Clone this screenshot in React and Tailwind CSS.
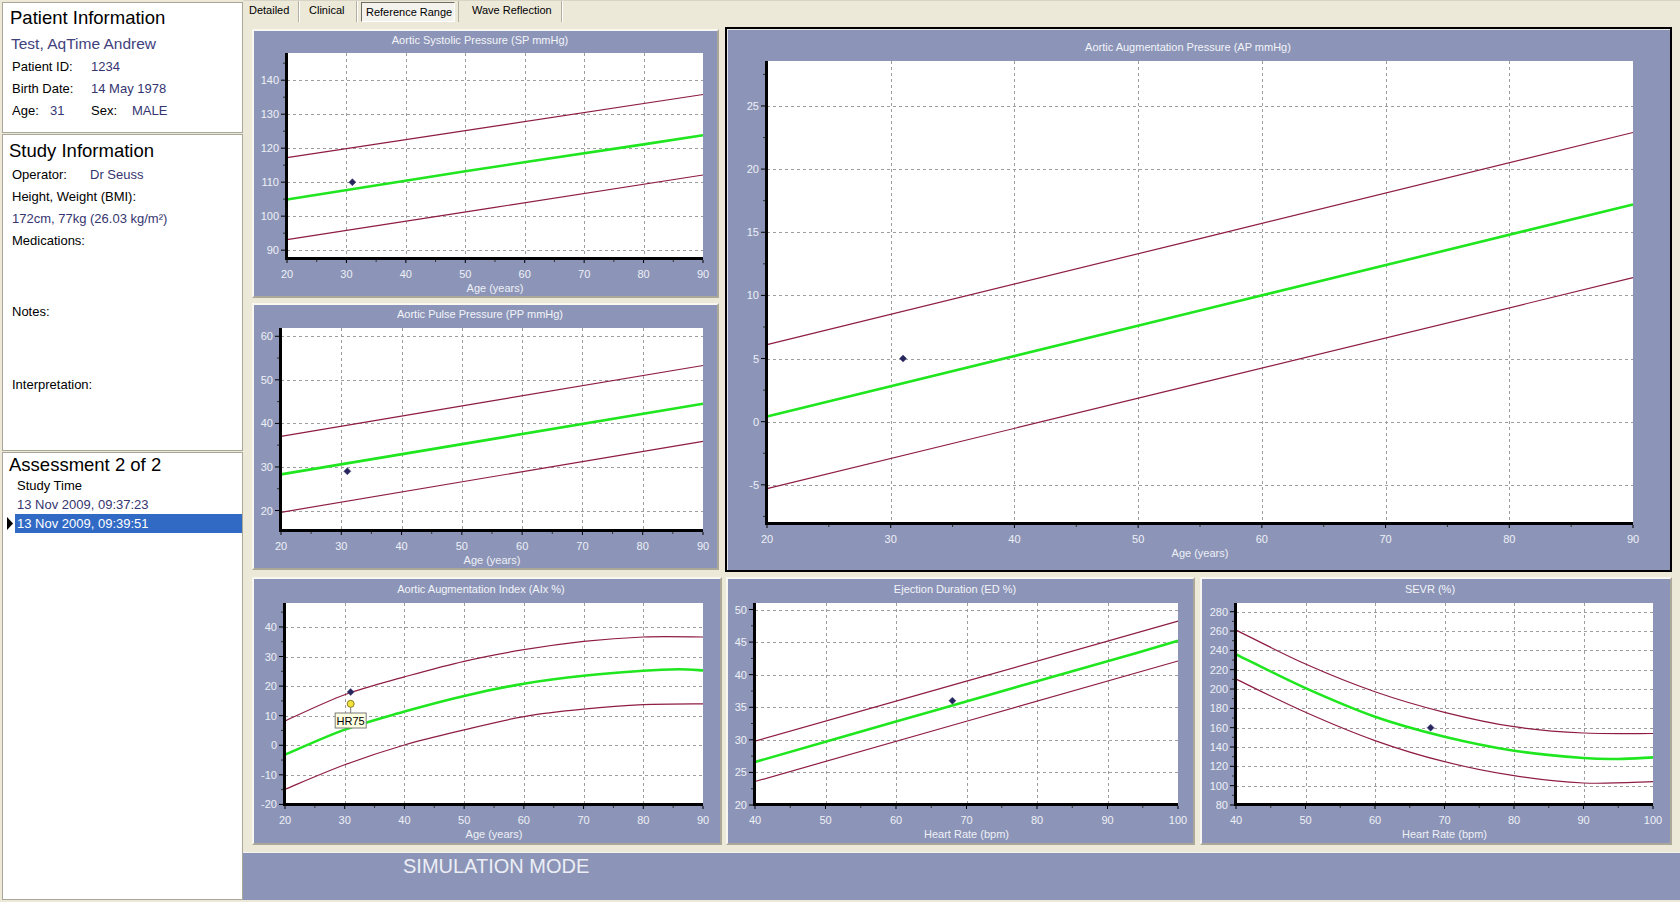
import React from "react"

const MAROON = "#8e1d41"
const GREEN = "#1fe61f"

function range(a, b, s) {
  const out = []
  for (let v = a; v <= b + 1e-9; v += s) out.push(Math.round(v * 100) / 100)
  return out
}

// catmull-rom through the points, in pixel space
function curve(pts, px, py) {
  const p = pts.map(([x, y]) => [px(x), py(y)])
  let d = `M${p[0][0].toFixed(1)},${p[0][1].toFixed(1)}`
  for (let i = 0; i < p.length - 1; i++) {
    const a = p[i - 1] || p[i]
    const b = p[i]
    const c = p[i + 1]
    const e = p[i + 2] || c
    const c1 = [b[0] + (c[0] - a[0]) / 6, b[1] + (c[1] - a[1]) / 6]
    const c2 = [c[0] - (e[0] - b[0]) / 6, c[1] - (e[1] - b[1]) / 6]
    d += ` C${c1[0].toFixed(1)},${c1[1].toFixed(1)} ${c2[0].toFixed(1)},${c2[1].toFixed(1)} ${c[0].toFixed(1)},${c[1].toFixed(1)}`
  }
  return d
}

function Chart({ w, h, plot, title, tx, ty, xr, yr, xTitle, upper, mid, lower, dot, extra }) {
  const { l, t, r, b } = plot
  const px = (v) => l + ((v - xr.min) / (xr.max - xr.min)) * (r - l)
  const py = (v) => b - ((v - yr.min) / (yr.max - yr.min)) * (b - t)
  const xt = range(xr.min, xr.max, xr.step)
  const xm = range(xr.min + xr.step / 2, xr.max, xr.step)
  const yt = range(yr.from, yr.to, yr.step)
  const ym = range(yr.from - yr.step / 2, yr.to + yr.step / 2, yr.step).filter((v) => v > yr.min && v < yr.max)

  return (
    <svg width={w} height={h} className="block" fontFamily="'Liberation Sans', Arial, sans-serif">
      <text x={tx} y={ty + 4} textAnchor="middle" fontSize="11" fill="#f3f4f9">
        {title}
      </text>
      <rect x={l} y={t} width={r - l} height={b - t} fill="#fff" />

      {yt
        .filter((v) => v > yr.min + 0.3 && v < yr.max)
        .map((v) => {
          const y = Math.round(py(v)) + 0.5
          return <line key={"gy" + v} x1={l} x2={r} y1={y} y2={y} stroke="#9d9d9d" strokeDasharray="3 3" />
        })}
      {xt
        .filter((v) => v > xr.min && v < xr.max)
        .map((v) => {
          const x = Math.round(px(v)) + 0.5
          return <line key={"gx" + v} x1={x} x2={x} y1={t} y2={b} stroke="#9d9d9d" strokeDasharray="3 3" />
        })}

      <path d={curve(upper, px, py)} fill="none" stroke={MAROON} strokeWidth="1.2" />
      <path d={curve(lower, px, py)} fill="none" stroke={MAROON} strokeWidth="1.2" />
      <path d={curve(mid, px, py)} fill="none" stroke={GREEN} strokeWidth="2.6" />

      <rect x={l - 2} y={t} width={3} height={b - t + 1} fill="#000" />
      <rect x={l - 2} y={b - 2} width={r - l + 2} height={3} fill="#000" />

      {xt.map((v) => (
        <line key={"tx" + v} x1={px(v)} x2={px(v)} y1={b + 1} y2={b + 4} stroke="#000" />
      ))}
      {xm.map((v) => (
        <line key={"mx" + v} x1={px(v)} x2={px(v)} y1={b + 1} y2={b + 3} stroke="#333" />
      ))}
      {yt.map((v) => (
        <line key={"ty" + v} x1={l - 6} x2={l - 2} y1={py(v)} y2={py(v)} stroke="#000" />
      ))}
      {ym.map((v) => (
        <line key={"my" + v} x1={l - 4} x2={l - 2} y1={py(v)} y2={py(v)} stroke="#333" />
      ))}

      {yt.map((v) => (
        <text key={"ly" + v} x={l - 8} y={py(v) + 4} textAnchor="end" fontSize="11" fill="#eef0f6">
          {v}
        </text>
      ))}
      {xt.map((v) => (
        <text key={"lx" + v} x={px(v)} y={b + 19} textAnchor="middle" fontSize="11" fill="#eef0f6">
          {v}
        </text>
      ))}
      <text x={(l + r) / 2} y={b + 33} textAnchor="middle" fontSize="11" fill="#eef0f6">
        {xTitle}
      </text>

      <path
        d={`M${px(dot[0])},${py(dot[1]) - 3.5} l3.5,3.5 l-3.5,3.5 l-3.5,-3.5 z`}
        fill="#26265c"
        stroke="#4a4a80"
        strokeWidth="0.6"
      />
      {extra && extra(px, py)}
    </svg>
  )
}

function Panel({ className, children }) {
  return (
    <div
      className={`shrink-0 border-2 border-b-[#aca899] border-l-[#f8f7f2] border-r-[#aca899] border-t-[#f8f7f2] bg-[#8c95b8] ${className}`}
    >
      {children}
    </div>
  )
}

const age = { min: 20, max: 90, step: 10 }
const hr = { min: 40, max: 100, step: 10 }

function Row({ label, value, labelW = "w-[79px]" }) {
  return (
    <div className="flex h-[22px] items-center text-[13px]">
      <span className={`${labelW} text-black`}>{label}</span>
      <span className="text-[#35356f]">{value}</span>
    </div>
  )
}

function Sidebar() {
  return (
    <div className="flex w-[243px] shrink-0 flex-col gap-[1px] bg-[#ece9d8] py-[2px] pl-[2px]">
      <section className="h-[131px] border border-[#a9a797] bg-white pl-[9px] pt-[4px]">
        <div className="-ml-[2px] h-[22px] text-[18.5px] leading-[22px] text-black">Patient Information</div>
        <div className="-ml-[1px] mt-[4px] h-[23px] text-[15.5px] leading-[22px] text-[#41417e]">Test, AqTime Andrew</div>
        <Row label="Patient ID:" value="1234" />
        <Row label="Birth Date:" value="14 May 1978" />
        <div className="flex h-[22px] items-center text-[13px]">
          <span className="w-[38px] text-black">Age:</span>
          <span className="w-[41px] text-[#35356f]">31</span>
          <span className="w-[41px] text-black">Sex:</span>
          <span className="text-[#35356f]">MALE</span>
        </div>
      </section>

      <section className="h-[317px] border border-[#a9a797] bg-white pl-[9px] pt-[5px]">
        <div className="-ml-[3px] h-[22px] text-[18.5px] leading-[22px] text-black">Study Information</div>
        <div className="mt-[2px]">
          <Row label="Operator:" value="Dr Seuss" labelW="w-[78px]" />
        </div>
        <div className="flex h-[22px] items-center text-[13px] text-black">Height, Weight (BMI):</div>
        <div className="flex h-[22px] items-center text-[13px] text-[#35356f]">172cm, 77kg (26.03 kg/m²)</div>
        <div className="flex h-[22px] items-center text-[13px] text-black">Medications:</div>
        <div className="mt-[49px] flex h-[22px] items-center text-[13px] text-black">Notes:</div>
        <div className="mt-[51px] flex h-[22px] items-center text-[13px] text-black">Interpretation:</div>
      </section>

      <section className="flex-1 border border-[#a9a797] bg-white pt-[1px]">
        <div className="ml-[6px] h-[22px] text-[18.5px] leading-[22px] text-black">Assessment 2 of 2</div>
        <div className="ml-[14px] flex h-[20px] items-center text-[13px] text-black">Study Time</div>
        <div className="ml-[14px] flex h-[18px] items-center text-[13px] text-[#35356f]">13 Nov 2009, 09:37:23</div>
        <div className="flex h-[19px] items-center pl-[4px]">
          <svg width="6" height="13" className="shrink-0">
            <polygon points="0,0 6,6.5 0,13" fill="#000" />
          </svg>
          <div className="ml-[2px] flex h-[19px] flex-1 items-center bg-[#316ac5] pl-[2px] text-[13px] text-white">
            13 Nov 2009, 09:39:51
          </div>
        </div>
      </section>
    </div>
  )
}

function Tabs() {
  return (
    <div className="flex h-[23px] shrink-0 items-start border-t border-[#d8d5c6] text-[11px] text-black">
      <div className="h-[21px] w-[56px] border-r border-[#b3b0a2] pl-[6px] leading-[19px] shadow-[1px_0_0_#ffffff]">Detailed</div>
      <div className="ml-[1px] h-[21px] w-[57px] border-r border-[#b3b0a2] pl-[9px] leading-[19px] shadow-[1px_0_0_#ffffff]">Clinical</div>
      <div className="ml-[4px] mt-[1px] h-[20px] w-[94px] border border-b-white border-l-[#6f6d62] border-r-white border-t-[#6f6d62] bg-[#f3f2ec] pl-[4px] leading-[19px]">
        Reference Range
      </div>
      <div className="ml-[3px] h-[21px] w-[104px] border-l border-r border-[#b3b0a2] pl-[13px] leading-[19px] shadow-[1px_0_0_#ffffff]">
        Wave Reflection
      </div>
    </div>
  )
}

export default function App() {
  return (
    <div className="flex h-[902px] w-[1680px] overflow-hidden bg-[#ece9d8] font-['Liberation_Sans',Arial,sans-serif]">
      <Sidebar />
      <div className="flex min-w-0 flex-1 flex-col">
        <Tabs />
        <div className="pl-[9px] pt-[4px]">
          <div className="flex gap-[6px]">
            <div className="flex flex-col gap-[5px] pt-[2px]">
              <Panel className="h-[269px] w-[467px]">
                <Chart
                  w={463}
                  h={265}
                  plot={{ l: 33, t: 22, r: 449, b: 228 }}
                  title="Aortic Systolic Pressure (SP mmHg)"
                  tx={226}
                  ty={9}
                  xr={age}
                  yr={{ min: 87.4, max: 148, from: 90, to: 140, step: 10 }}
                  xTitle="Age (years)"
                  upper={[[20, 117.2], [90, 135.8]]}
                  mid={[[20, 104.9], [50, 113.2], [80, 121.1], [90, 123.8]]}
                  lower={[[20, 93.1], [90, 112.1]]}
                  dot={[31, 110]}
                />
              </Panel>
              <Panel className="h-[267px] w-[467px]">
                <Chart
                  w={463}
                  h={263}
                  plot={{ l: 27, t: 23, r: 449, b: 226 }}
                  title="Aortic Pulse Pressure (PP mmHg)"
                  tx={226}
                  ty={9}
                  xr={age}
                  yr={{ min: 15.3, max: 61.9, from: 20, to: 60, step: 10 }}
                  xTitle="Age (years)"
                  upper={[[20, 37.05], [90, 53.3]]}
                  mid={[[20, 28.3], [90, 44.5]]}
                  lower={[[20, 19.6], [90, 35.9]]}
                  dot={[31, 29]}
                />
              </Panel>
            </div>
            <div className="h-[545px] w-[947px] shrink-0 border-2 border-black">
              <div className="h-full w-full border-l border-t border-[#e6e6e6] bg-[#8c95b8]">
                <Chart
                  w={942}
                  h={540}
                  plot={{ l: 39, t: 31, r: 905, b: 494 }}
                  title="Aortic Augmentation Pressure (AP mmHg)"
                  tx={460}
                  ty={17}
                  xr={age}
                  yr={{ min: -8.1, max: 28.56, from: -5, to: 25, step: 5 }}
                  xTitle="Age (years)"
                  upper={[[20, 6.1], [90, 22.9]]}
                  mid={[[20, 0.4], [90, 17.2]]}
                  lower={[[20, -5.3], [90, 11.4]]}
                  dot={[31, 5]}
                />
              </div>
            </div>
          </div>

          <div className="mt-[5px] flex">
            <Panel className="h-[268px] w-[470px]">
              <Chart
                w={466}
                h={264}
                plot={{ l: 31, t: 24, r: 449, b: 226 }}
                title="Aortic Augmentation Index (AIx %)"
                tx={227}
                ty={10}
                xr={age}
                yr={{ min: -20.2, max: 48.1, from: -20, to: 40, step: 10 }}
                xTitle="Age (years)"
                upper={[[20, 8.25], [30, 17.1], [40, 23.1], [50, 28.4], [60, 32.3], [70, 35.1], [80, 36.6], [90, 36.6]]}
                mid={[[20, -3.2], [30, 5.3], [40, 11.4], [50, 16.7], [60, 20.8], [70, 23.5], [80, 25.2], [86, 25.7], [90, 25.3]]}
                lower={[[20, -14.9], [30, -6.6], [40, 0.1], [50, 5.2], [60, 9.7], [70, 12.2], [80, 13.7], [90, 14]]}
                dot={[31, 18]}
                extra={(px, py) => {
                  const x = px(31)
                  const y = py(14)
                  return (
                    <g>
                      <line x1={x} x2={x} y1={y + 3.5} y2={134} stroke="#777" />
                      <circle cx={x} cy={y} r="3.5" fill="#f2e23c" stroke="#8a7f1c" strokeWidth="1" />
                      <rect x={x - 15.5} y={134} width={31} height={15} fill="#ffffe1" stroke="#7a7a7a" />
                      <text x={x} y={145.5} textAnchor="middle" fontSize="11" fill="#000">
                        HR75
                      </text>
                    </g>
                  )
                }}
              />
            </Panel>
            <Panel className="ml-[4px] h-[268px] w-[469px]">
              <Chart
                w={465}
                h={264}
                plot={{ l: 27, t: 24, r: 450, b: 226 }}
                title="Ejection Duration (ED %)"
                tx={227}
                ty={10}
                xr={hr}
                yr={{ min: 20, max: 51, from: 20, to: 50, step: 5 }}
                xTitle="Heart Rate (bpm)"
                upper={[[40, 29.8], [100, 48.2]]}
                mid={[[40, 26.6], [60, 32.8], [80, 39], [94, 43.3], [100, 45.2]]}
                lower={[[40, 23.6], [100, 42.1]]}
                dot={[68, 36]}
              />
            </Panel>
            <Panel className="ml-[5px] h-[268px] w-[472px]">
              <Chart
                w={468}
                h={264}
                plot={{ l: 34, t: 24, r: 451, b: 226 }}
                title="SEVR (%)"
                tx={228}
                ty={10}
                xr={hr}
                yr={{ min: 80, max: 289, from: 80, to: 280, step: 20 }}
                xTitle="Heart Rate (bpm)"
                upper={[[40, 261], [50, 225.9], [60, 197.2], [70, 175.9], [80, 161], [90, 154.5], [100, 154]]}
                mid={[[40, 235.9], [50, 201], [60, 171.4], [70, 150.7], [80, 136.2], [90, 128.6], [95, 127.6], [100, 129.3]]}
                lower={[[40, 210.3], [50, 175.9], [60, 146.6], [70, 124.8], [80, 110.3], [90, 102.8], [100, 104.1]]}
                dot={[68, 160]}
              />
            </Panel>
          </div>
        </div>

        <div className="mt-[7px] h-[48px] shrink-0 border-t border-[#f4f3ee] bg-[#8c95b8] pl-[160px] text-[20px] leading-[26px] text-[#eceef5]">
          SIMULATION MODE
        </div>
      </div>
    </div>
  )
}
